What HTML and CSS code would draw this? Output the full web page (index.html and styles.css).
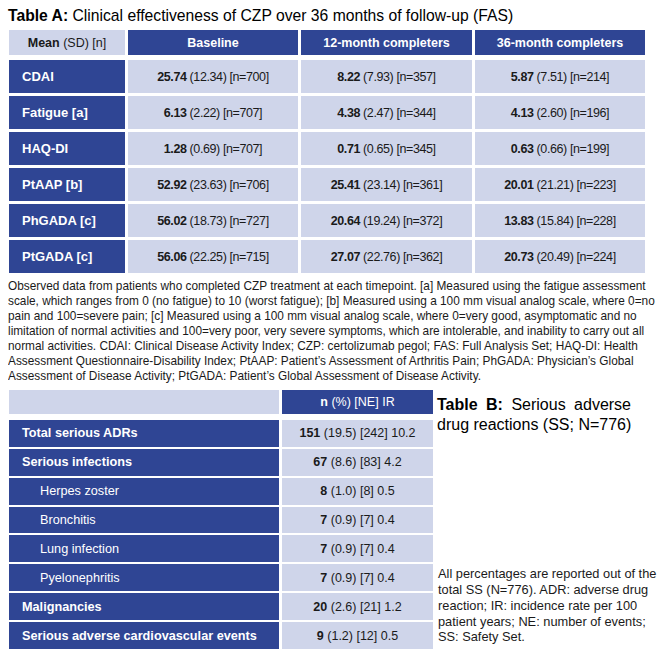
FILE: index.html
```html
<!DOCTYPE html>
<html>
<head>
<meta charset="utf-8">
<link rel="stylesheet" href="styles.css">
</head>
<body>
<div class="page">
  <h1 class="title"><b>Table A:</b> Clinical effectiveness of CZP over 36 months of follow-up (FAS)</h1>
  <div class="ta">
    <div class="ta-row ta-head">
      <div class="c lite"><span><b>Mean</b> (SD) [n]</span></div>
      <div class="c dark"><span>Baseline</span></div>
      <div class="c dark"><span>12-month completers</span></div>
      <div class="c dark"><span>36-month completers</span></div>
    </div>
    <div class="ta-row">
      <div class="c lab"><span>CDAI</span></div>
      <div class="c val"><span><b>25.74</b> (12.34) [n=700]</span></div>
      <div class="c val"><span><b>8.22</b> (7.93) [n=357]</span></div>
      <div class="c val"><span><b>5.87</b> (7.51) [n=214]</span></div>
    </div>
    <div class="ta-row">
      <div class="c lab"><span>Fatigue [a]</span></div>
      <div class="c val"><span><b>6.13</b> (2.22) [n=707]</span></div>
      <div class="c val"><span><b>4.38</b> (2.47) [n=344]</span></div>
      <div class="c val"><span><b>4.13</b> (2.60) [n=196]</span></div>
    </div>
    <div class="ta-row">
      <div class="c lab"><span>HAQ-DI</span></div>
      <div class="c val"><span><b>1.28</b> (0.69) [n=707]</span></div>
      <div class="c val"><span><b>0.71</b> (0.65) [n=345]</span></div>
      <div class="c val"><span><b>0.63</b> (0.66) [n=199]</span></div>
    </div>
    <div class="ta-row">
      <div class="c lab"><span>PtAAP [b]</span></div>
      <div class="c val"><span><b>52.92</b> (23.63) [n=706]</span></div>
      <div class="c val"><span><b>25.41</b> (23.14) [n=361]</span></div>
      <div class="c val"><span><b>20.01</b> (21.21) [n=223]</span></div>
    </div>
    <div class="ta-row">
      <div class="c lab"><span>PhGADA [c]</span></div>
      <div class="c val"><span><b>56.02</b> (18.73) [n=727]</span></div>
      <div class="c val"><span><b>20.64</b> (19.24) [n=372]</span></div>
      <div class="c val"><span><b>13.83</b> (15.84) [n=228]</span></div>
    </div>
    <div class="ta-row">
      <div class="c lab"><span>PtGADA [c]</span></div>
      <div class="c val"><span><b>56.06</b> (22.25) [n=715]</span></div>
      <div class="c val"><span><b>27.07</b> (22.76) [n=362]</span></div>
      <div class="c val"><span><b>20.73</b> (20.49) [n=224]</span></div>
    </div>
  </div>
  <p class="note-a">Observed data from patients who completed CZP treatment at each timepoint. [a] Measured using the fatigue assessment<br>scale, which ranges from 0 (no fatigue) to 10 (worst fatigue); [b] Measured using a 100 mm visual analog scale, where 0=no<br>pain and 100=severe pain; [c] Measured using a 100 mm visual analog scale, where 0=very good, asymptomatic and no<br>limitation of normal activities and 100=very poor, very severe symptoms, which are intolerable, and inability to carry out all<br>normal activities. CDAI: Clinical Disease Activity Index; CZP: certolizumab pegol; FAS: Full Analysis Set; HAQ-DI: Health<br>Assessment Questionnaire-Disability Index; PtAAP: Patient’s Assessment of Arthritis Pain; PhGADA: Physician’s Global<br>Assessment of Disease Activity; PtGADA: Patient’s Global Assessment of Disease Activity.</p>
  <div class="sec-b">
    <div class="tb">
      <div class="tb-row tb-head">
        <div class="c lite"></div>
        <div class="c dark hb"><span><b>n</b> (%) [NE] IR</span></div>
      </div>
      <div class="tb-row">
        <div class="c lab"><span>Total serious ADRs</span></div>
        <div class="c val"><span><b>151</b> (19.5) [242] 10.2</span></div>
      </div>
      <div class="tb-row">
        <div class="c lab"><span>Serious infections</span></div>
        <div class="c val"><span><b>67</b> (8.6) [83] 4.2</span></div>
      </div>
      <div class="tb-row">
        <div class="c lab sub"><span>Herpes zoster</span></div>
        <div class="c val"><span><b>8</b> (1.0) [8] 0.5</span></div>
      </div>
      <div class="tb-row">
        <div class="c lab sub"><span>Bronchitis</span></div>
        <div class="c val"><span><b>7</b> (0.9) [7] 0.4</span></div>
      </div>
      <div class="tb-row">
        <div class="c lab sub"><span>Lung infection</span></div>
        <div class="c val"><span><b>7</b> (0.9) [7] 0.4</span></div>
      </div>
      <div class="tb-row">
        <div class="c lab sub"><span>Pyelonephritis</span></div>
        <div class="c val"><span><b>7</b> (0.9) [7] 0.4</span></div>
      </div>
      <div class="tb-row">
        <div class="c lab"><span>Malignancies</span></div>
        <div class="c val"><span><b>20</b> (2.6) [21] 1.2</span></div>
      </div>
      <div class="tb-row">
        <div class="c lab"><span>Serious adverse cardiovascular events</span></div>
        <div class="c val"><span><b>9</b> (1.2) [12] 0.5</span></div>
      </div>
    </div>
    <div class="side">
      <h2 class="title-b"><span class="wide"><b>Table B:</b> Serious adverse</span><br>drug reactions (SS; N=776)</h2>
      <p class="note-b">All percentages are reported out of the<br>total SS (N=776). ADR: adverse drug<br>reaction; IR: incidence rate per 100<br>patient years; NE: number of events;<br>SS: Safety Set.</p>
    </div>
  </div>
</div>
</body>
</html>
```

FILE: styles.css
```css
* { box-sizing: border-box; }
html, body { margin: 0; padding: 0; background: #ffffff; }
body {
  font-family: "Liberation Sans", Arial, sans-serif;
  color: #000;
}
.page {
  width: 661px;
  height: 661px;
  padding: 6px 0 0 9px;
  overflow: hidden;
}
.title {
  margin: 0 0 4px -1px;
  font-size: 15.7px;
  line-height: 20px;
  font-weight: normal;
  white-space: nowrap;
}
.ta {
  display: flex;
  flex-direction: column;
  gap: 3px;
  width: 636px;
}
.ta-row {
  display: grid;
  grid-template-columns: 116px 170px 171px 170px;
  column-gap: 3px;
  height: 33px;
}
.ta-row.ta-head {
  height: 25px;
  margin-bottom: 2px;
}
.c {
  display: flex;
  align-items: center;
  font-size: 12.5px;
  white-space: nowrap;
}
.lite {
  background: #cfd5ea;
  justify-content: center;
  color: #1a1a1a;
}
.dark {
  background: #2f4594;
  color: #fff;
  font-weight: bold;
  justify-content: center;
}
.lab {
  background: #2f4594;
  color: #fff;
  font-weight: bold;
  font-size: 13px;
  padding-left: 13px;
}
.val {
  background: #cfd5ea;
  justify-content: center;
  color: #1a1a1a;
}
.ta .val { letter-spacing: -0.4px; }
.note-a {
  margin: 5px 0 0 -1px;
  font-size: 13px;
  line-height: 15px;
  white-space: nowrap;
  color: #1a1a1a;
  transform: scaleX(0.91);
  transform-origin: 0 0;
}
.sec-b {
  margin-top: 7px;
  display: flex;
  gap: 4px;
  height: 259px;
}
.tb {
  display: flex;
  flex-direction: column;
  gap: 2px;
  width: 424px;
}
.tb-row {
  display: grid;
  grid-template-columns: 270px 151px;
  column-gap: 3px;
  height: 27px;
}
.tb-row.tb-head {
  height: 24px;
  margin-bottom: 4px;
}
.tb .c { font-size: 12.5px; }
.tb .lab { font-size: 12.7px; }
.hb { font-weight: normal; }
.lab.sub {
  font-weight: normal;
  padding-left: 31px;
}
.side {
  display: flex;
  flex-direction: column;
  justify-content: space-between;
  flex: 1;
}
.title-b {
  margin: 5px 0 0 0;
  font-size: 16px;
  line-height: 20px;
  font-weight: normal;
  white-space: nowrap;
}
.wide { word-spacing: 4px; }
.note-b {
  margin: 0 0 4px 1px;
  font-size: 12.8px;
  line-height: 15.7px;
  white-space: nowrap;
  color: #1a1a1a;
}
```
